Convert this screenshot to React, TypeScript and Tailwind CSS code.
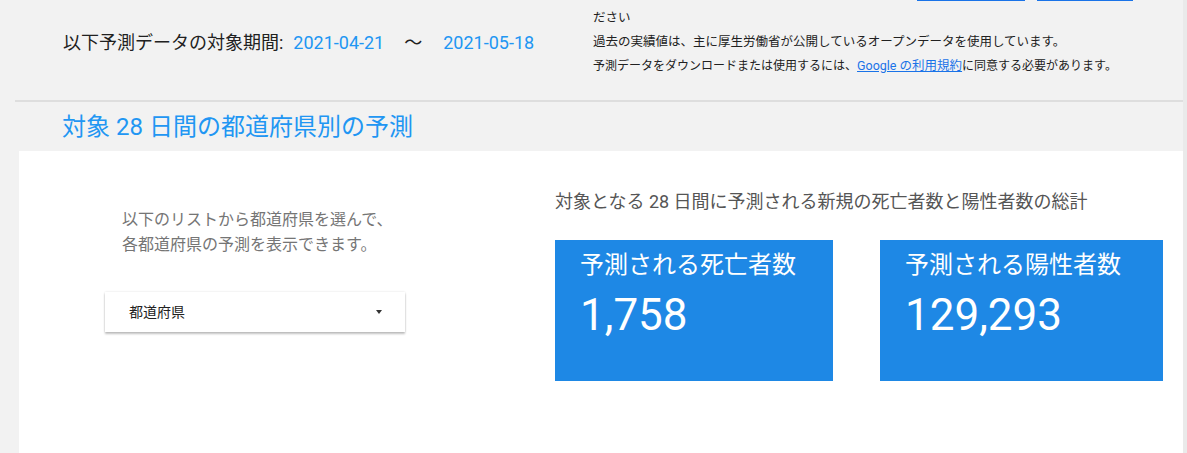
import React from "react";

const font = { fontFamily: '"Roboto","Noto Sans CJK JP",sans-serif' };

export default function App() {
  return (
    <div
      className="flex h-[453px] w-[1187px] overflow-hidden bg-[#f2f2f2] font-['Roboto','Noto_Sans_CJK_JP',sans-serif]"
      style={font}
    >
      <div className="flex min-w-0 flex-1 flex-col">
        {/* header */}
        <div className="flex h-[100px] shrink-0">
          <div className="flex w-[593px] shrink-0 items-baseline pl-[63px] pt-[29px] text-[18px] leading-[27px]">
            <span className="text-[#212121]">以下予測データの対象期間:</span>
            <span className="ml-[10px] text-[#2196f3]">2021-04-21</span>
            <span className="ml-[20px] text-[#212121]">〜</span>
            <span className="ml-[21px] text-[#2196f3]">2021-05-18</span>
          </div>
          <div className="flex flex-col">
            <div className="flex h-[1px] gap-[12px] pl-[324px]">
              <div className="h-[1px] w-[108px] bg-[#1a73e8]" />
              <div className="h-[1px] w-[96px] bg-[#1a73e8]" />
            </div>
            <div className="pt-[5px] text-[12.5px] leading-[24px] text-[#212121]">
              <div>ださい</div>
              <div>過去の実績値は、主に厚生労働省が公開しているオープンデータを使用しています。</div>
              <div className="text-[12px]">
                予測データをダウンロードまたは使用するには、
                <span className="text-[12.5px] text-[#1a73e8] underline">Google の利用規約</span>
                に同意する必要があります。
              </div>
            </div>
          </div>
        </div>
        {/* separator */}
        <div className="ml-[15px] h-[2px] shrink-0 bg-[#dedede]" />
        {/* title */}
        <div className="flex h-[49px] shrink-0 items-center pl-[62px] text-[24px] leading-[30px] text-[#2196f3]">
          対象 28 日間の都道府県別の予測
        </div>
        {/* white panel */}
        <div className="ml-[19px] flex flex-1 bg-white">
          <div className="flex w-[536px] shrink-0 flex-col pl-[86px] pt-[56px]">
            <div className="ml-[17px] text-[16px] leading-[25px] text-[#757575]">
              <div>以下のリストから都道府県を選んで、</div>
              <div>各都道府県の予測を表示できます。</div>
            </div>
            <div className="mt-[35px] flex h-[40px] w-[300px] items-center justify-between bg-white pl-[24px] pr-[23px] shadow-[0_2px_2px_rgba(0,0,0,0.24),0_0_2px_rgba(0,0,0,0.12)]">
              <span className="text-[14px] text-[#212121]">都道府県</span>
              <span className="h-0 w-0 border-l-[3.5px] border-r-[3.5px] border-t-[4px] border-l-transparent border-r-transparent border-t-[#333]" />
            </div>
          </div>
          <div className="flex flex-col pt-[37px]">
            <div className="text-[18px] leading-[27px] text-[#555]">
              対象となる 28 日間に予測される新規の死亡者数と陽性者数の総計
            </div>
            <div className="mt-[25px] flex gap-[47px]">
              <div className="h-[141px] w-[278px] bg-[#1e88e5] px-[25px] pt-[9px] text-white">
                <div className="text-[24px] leading-[32px]">予測される死亡者数</div>
                <div className="mt-[8px] text-[44px] leading-[52px]">1,758</div>
              </div>
              <div className="h-[141px] w-[283px] bg-[#1e88e5] px-[25px] pt-[9px] text-white">
                <div className="text-[24px] leading-[32px]">予測される陽性者数</div>
                <div className="mt-[8px] text-[44px] leading-[52px]">129,293</div>
              </div>
            </div>
          </div>
        </div>
      </div>
      <div className="w-[4px] shrink-0 bg-[#eaeaea]" />
    </div>
  );
}
